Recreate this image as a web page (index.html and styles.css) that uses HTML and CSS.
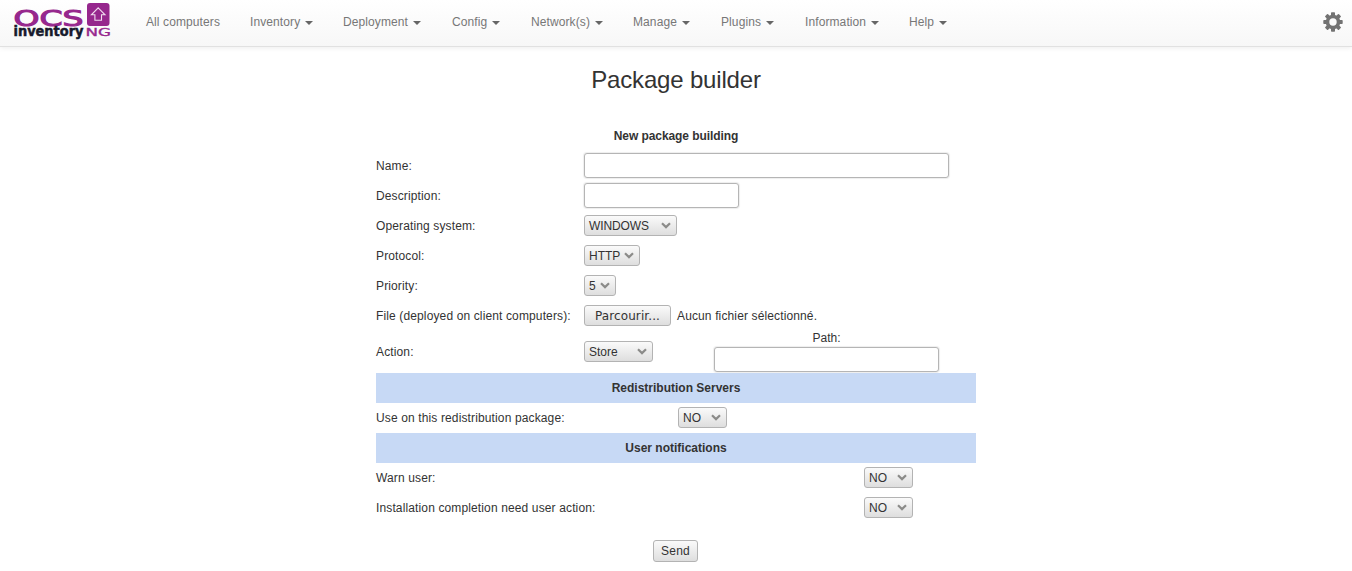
FILE: index.html
```html
<!DOCTYPE html>
<html lang="en">
<head>
<meta charset="utf-8">
<title>Package builder</title>
<link rel="stylesheet" href="styles.css">
</head>
<body>
<svg width="0" height="0" class="defs"><symbol id="chev" viewBox="0 0 10 7"><path d="M1 1.2 5 5.1 9 1.2" fill="none" stroke="#8b8b89" stroke-width="2.2"/></symbol></svg>
<header class="navbar">
  <svg class="logo" width="98" height="38" viewBox="0 0 98 38" role="img" aria-label="OCS Inventory NG">
    <text class="logo-ocs" x="0.5" y="22.5" textLength="70" lengthAdjust="spacingAndGlyphs">OCS</text>
    <rect x="74" y="0" width="22.5" height="23" rx="3" fill="#96278d"/>
    <path d="M85.2 4.8 92 11.8H88.5V17.3H81.9V11.8H78.4Z" fill="none" stroke="#f0dcee" stroke-width="1.1"/>
    <text class="logo-inv" x="0.5" y="33" textLength="70" lengthAdjust="spacingAndGlyphs">inventory</text>
    <text class="logo-ng" x="72.5" y="33" textLength="25.5" lengthAdjust="spacingAndGlyphs">NG</text>
  </svg>
  <nav class="menu">
    <a>All computers</a>
    <a>Inventory<i class="caret"></i></a>
    <a>Deployment<i class="caret"></i></a>
    <a>Config<i class="caret"></i></a>
    <a>Network(s)<i class="caret"></i></a>
    <a>Manage<i class="caret"></i></a>
    <a>Plugins<i class="caret"></i></a>
    <a>Information<i class="caret"></i></a>
    <a>Help<i class="caret"></i></a>
  </nav>
  <svg class="gear" width="20" height="20" viewBox="-10 -10 20 20">
    <g fill="#737373"><rect id="t" x="-2" y="-9.7" width="4" height="19.4" rx=".8"/><use href="#t" transform="rotate(45)"/><use href="#t" transform="rotate(90)"/><use href="#t" transform="rotate(135)"/><circle r="7.3"/></g>
    <circle r="3.7" fill="#fbfbfb"/>
  </svg>
</header>
<main>
  <h1>Package builder</h1>
  <form class="builder">
    <div class="heading title">New package building</div>
    <div class="row upper"><label>Name:</label><span class="field name"></span></div>
    <div class="row upper"><label>Description:</label><span class="field desc"></span></div>
    <div class="row upper"><label>Operating system:</label><span class="btn select os">WINDOWS<svg class="chev"><use href="#chev"/></svg></span></div>
    <div class="row upper"><label>Protocol:</label><span class="btn select proto">HTTP<svg class="chev"><use href="#chev"/></svg></span></div>
    <div class="row upper"><label>Priority:</label><span class="btn select prio">5<svg class="chev"><use href="#chev"/></svg></span></div>
    <div class="row upper"><label>File (deployed on client computers):</label><span class="btn browse">Parcourir...</span><span class="nofile">Aucun fichier sélectionné.</span></div>
    <div class="row action"><label>Action:</label><span class="btn select store">Store<svg class="chev"><use href="#chev"/></svg></span><div class="path"><span>Path:</span><span class="field"></span></div></div>
    <div class="heading band">Redistribution Servers</div>
    <div class="row redist"><label>Use on this redistribution package:</label><span class="btn select no">NO<svg class="chev"><use href="#chev"/></svg></span></div>
    <div class="heading band">User notifications</div>
    <div class="row notify"><label>Warn user:</label><span class="btn select no">NO<svg class="chev"><use href="#chev"/></svg></span></div>
    <div class="row notify"><label>Installation completion need user action:</label><span class="btn select no">NO<svg class="chev"><use href="#chev"/></svg></span></div>
    <span class="btn send">Send</span>
  </form>
</main>
</body>
</html>
```
FILE: styles.css
```css
* { box-sizing: border-box; }
body { margin: 0; height: 571px; overflow: hidden; background: #fff; color: #333; font: 12px/18px "Liberation Sans", Arial, sans-serif; }
.defs { display: block; }
.navbar { display: flex; align-items: flex-start; height: 47px; padding: 0 9px 0 13px; background: linear-gradient(#fff, #f7f7f7); border-bottom: 1px solid #e1e1e1; box-shadow: 0 1px 5px rgba(0,0,0,.075); }
.logo { margin-top: 3px; flex: none; overflow: visible; }
.logo-ocs { font: 22px "DejaVu Sans", sans-serif; fill: #96278d; stroke: #96278d; stroke-width: 1.1px; }
.logo-inv { font: bold 14px "DejaVu Sans", sans-serif; fill: #171a2c; stroke: #171a2c; stroke-width: .5px; }
.logo-ng { font: 10px "DejaVu Sans", sans-serif; fill: #96278d; stroke: #96278d; stroke-width: .3px; }
.menu { display: grid; grid-template-columns: 104px 93px 109px 79px 102px 88px 84px 104px 60px; margin-left: 35px; padding-top: 13px; color: #777; letter-spacing: .1px; }
.menu a { white-space: nowrap; }
.caret { display: inline-block; margin-left: 5px; vertical-align: middle; border-top: 4px solid #666; border-left: 4px solid transparent; border-right: 4px solid transparent; }
.gear { margin: 12px 0 0 auto; }
h1 { margin: 19px 0 0; height: 54px; text-align: center; font-size: 24px; line-height: 27px; font-weight: 400; letter-spacing: -.18px; }
.builder { display: flex; flex-direction: column; width: 600px; margin: 0 auto; }
.heading { height: 30px; line-height: 30px; text-align: center; font-weight: 700; }
.title { padding-top: 1px; letter-spacing: -.08px; }
.band { background: #c7d9f5; }
.row { display: grid; grid-template-columns: 208px auto 1fr; align-items: center; justify-items: start; height: 30px; white-space: nowrap; }
.row label, .nofile { letter-spacing: .13px; }
.upper label, .nofile { padding-top: 2px; }
.action { height: 43px; }
.redist { grid-template-columns: 302px auto; justify-content: start; }
.notify { grid-template-columns: 488px auto; justify-content: start; }
.field { display: block; height: 25px; margin-top: 1px; border: 1px solid #b5b5b5; border-radius: 3px; background: #fff; box-shadow: 0 0 1px 1px #eee; }
.name { width: 365px; }
.desc { width: 155px; }
.btn { display: flex; align-items: center; justify-content: center; height: 21px; border: 1px solid #b3b3b3; border-radius: 3px; background: linear-gradient(#fafafa, #dedede); }
.select { justify-content: space-between; padding: 0 5px 0 4px; }
.upper .btn { padding-top: 1px; }
.chev { width: 10px; height: 7px; flex: none; }
.os { width: 93px; letter-spacing: -.1px; }
.proto { width: 56px; }
.prio { width: 32px; }
.store { width: 69px; }
.no { width: 49px; margin-bottom: 1px; }
.browse { width: 87px; font-family: "DejaVu Sans", sans-serif; letter-spacing: .1px; }
.nofile { margin-left: 6px; }
.path { display: flex; flex-direction: column; align-items: center; align-self: start; width: 225px; margin-left: 61px; line-height: 16px; }
.path > span:first-child { padding-top: 1px; line-height: 15px; }
.path .field { width: 100%; }
.send { width: 45px; height: 22px; margin: 17px 0 0 277px; letter-spacing: .2px; }
```
